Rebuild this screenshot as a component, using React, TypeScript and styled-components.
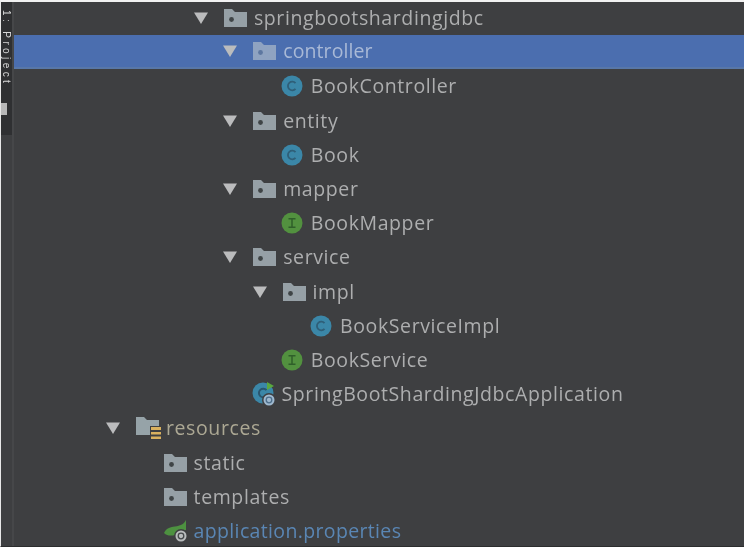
import React from "react";
import styled, { createGlobalStyle } from "styled-components";

const Global = createGlobalStyle`
  html, body { margin: 0; padding: 0; background: #3e3f41; width: 744px; height: 547px; overflow: hidden; }
  #root { width: 744px; height: 547px; }
`;

const Frame = styled.div`
  width: 744px;
  height: 547px;
  box-sizing: border-box;
  border-top: 2px solid #f2f2f2;
  border-left: 1px solid #e8e8e8;
  border-bottom: 1px solid #2c2d2e;
  display: flex;
  background: #3e3f41;
  overflow: hidden;
`;

const Sidebar = styled.div`
  flex: 0 0 13px;
  box-sizing: border-box;
  border-right: 2px solid #464749;
`;

const Strip = styled.div`
  height: 133px;
  background: #2f3032;
  overflow: hidden;
  filter: blur(0.4px);
`;

const StripLabel = styled.span`
  display: block;
  writing-mode: vertical-rl;
  font: 10px/11px "Liberation Sans", sans-serif;
  letter-spacing: 3.4px;
  color: #d8d8d8;
  padding-top: 8px;
  white-space: nowrap;
  height: 84px;
`;

const StripMark = styled.div`
  width: 6px;
  height: 12px;
  margin-top: 9px;
  background: #b8b8b8;
`;

const Tree = styled.div`
  flex: 1;
  display: flex;
  flex-direction: column;
  min-width: 0;
  margin-top: -1px;
  filter: blur(0.55px);
`;

const Row = styled.div<{ $level: number; $selected?: boolean }>`
  box-sizing: border-box;
  height: 34.2px;
  flex: 0 0 34.2px;
  display: flex;
  align-items: center;
  padding-left: ${(p) => 91 + p.$level * 29.3}px;
  background: ${(p) => (p.$selected ? "#4b6eaf" : "transparent")};
  border-bottom: ${(p) => (p.$selected ? "2px solid #5877a8" : "none")};
`;

const ArrowSlot = styled.span`
  flex: 0 0 31px;
  width: 31px;
  height: 16px;
  display: flex;
  align-items: center;
`;

const IconSlot = styled.span`
  flex: 0 0 30px;
  width: 30px;
  height: 24px;
  display: flex;
  align-items: center;
`;

const Label = styled.span<{ $tone?: "plain" | "link" | "res" | "sel" }>`
  font-family: "Open Sans", "Liberation Sans", sans-serif;
  font-size: 19.5px;
  letter-spacing: ${(p) => (p.$tone === "link" ? "0.35px" : p.$tone === "sel" ? "0.1px" : "0.6px")};
  line-height: 24px;
  white-space: nowrap;
  color: ${(p) =>
    p.$tone === "link" ? "#5a86b4" : p.$tone === "res" ? "#aca894" : p.$tone === "sel" ? "#a9b9d6" : "#adaeaf"};
`;

const Arrow = () => (
  <svg width="16" height="14" viewBox="0 0 16 14">
    <path d="M1 1.5h14L8 13z" fill="#bbbcbd" />
  </svg>
);

const Folder = ({ selected }: { selected?: boolean }) => (
  <svg width="23" height="18" viewBox="0 0 23 18">
    <path d="M0 0h8l3 3h12v15H0z" fill={selected ? "#8fa3c1" : "#96a0a6"} />
    <circle cx="7.5" cy="10.5" r="2.4" fill={selected ? "#5d77a0" : "#3f4446"} />
  </svg>
);

const ResFolder = () => (
  <svg width="25" height="24" viewBox="0 0 25 24">
    <path d="M0 1h8l3 3h12v15H0z" fill="#96a3a8" />
    <rect x="14" y="10" width="11" height="14" fill="#3e3f41" />
    <path d="M15 11h10v3H15zM15 16h10v2.500H15zM15 20.500h10v2.500H15z" fill="#d9b15f" />
  </svg>
);

const ClassIcon = () => (
  <svg width="22" height="22" viewBox="0 0 22 22">
    <circle cx="11" cy="11" r="10.500" fill="#3b87a8" />
    <path d="M14.500 8.200A4.300 4.300 0 1 0 14.500 13.800" fill="none" stroke="#2f5f78" strokeWidth="1.800" />
  </svg>
);

const InterfaceIcon = () => (
  <svg width="22" height="22" viewBox="0 0 22 22">
    <circle cx="11" cy="11" r="10.500" fill="#52913f" />
    <path d="M7.500 6.800h7M7.500 15.200h7M11 6.800v8.400" fill="none" stroke="#2f5f2a" strokeWidth="1.500" />
  </svg>
);

const SpringAppIcon = () => (
  <svg width="26" height="26" viewBox="0 0 26 26">
    <circle cx="11" cy="12" r="10.500" fill="#3b87a8" />
    <path d="M14.500 9.200A4.300 4.300 0 1 0 14.500 14.800" fill="none" stroke="#2a566e" strokeWidth="2" />
    <path d="M15 1v8l7-4z" fill="#5aa83f" />
    <circle cx="17" cy="19" r="7" fill="#3e3f41" />
    <circle cx="17" cy="19" r="5.500" fill="#9fb9cf" />
    <circle cx="17" cy="19" r="2.800" fill="none" stroke="#4d6f8c" strokeWidth="1.300" />
  </svg>
);

const PropsIcon = () => (
  <svg width="26" height="24" viewBox="0 0 26 24">
    <path d="M0 14C3 7 11 8 14 7c3-1 6-2 8-6v10c-3 1-8 2-11 5-4 1-8 1-11-2z" fill="#4d9140" />
    <circle cx="17" cy="17" r="7" fill="#3e3f41" />
    <circle cx="17" cy="17" r="5.500" fill="#b9bcbd" />
    <circle cx="17" cy="17" r="2.800" fill="none" stroke="#45494b" strokeWidth="1.300" />
  </svg>
);

type Kind = "folder" | "res" | "class" | "iface" | "app" | "props";

const icons: Record<Kind, (s: boolean) => React.ReactNode> = {
  folder: (s) => <Folder selected={s} />,
  res: () => <ResFolder />,
  class: () => <ClassIcon />,
  iface: () => <InterfaceIcon />,
  app: () => <SpringAppIcon />,
  props: () => <PropsIcon />,
};

type Item = { name: string; level: number; kind: Kind; open?: boolean; selected?: boolean; tone?: "plain" | "link" | "res" };

const items: Item[] = [
  { name: "springbootshardingjdbc", level: 3, kind: "folder", open: true },
  { name: "controller", level: 4, kind: "folder", open: true, selected: true },
  { name: "BookController", level: 5, kind: "class" },
  { name: "entity", level: 4, kind: "folder", open: true },
  { name: "Book", level: 5, kind: "class" },
  { name: "mapper", level: 4, kind: "folder", open: true },
  { name: "BookMapper", level: 5, kind: "iface" },
  { name: "service", level: 4, kind: "folder", open: true },
  { name: "impl", level: 5, kind: "folder", open: true },
  { name: "BookServiceImpl", level: 6, kind: "class" },
  { name: "BookService", level: 5, kind: "iface" },
  { name: "SpringBootShardingJdbcApplication", level: 4, kind: "app" },
  { name: "resources", level: 0, kind: "res", open: true, tone: "res" },
  { name: "static", level: 1, kind: "folder" },
  { name: "templates", level: 1, kind: "folder" },
  { name: "application.properties", level: 1, kind: "props", tone: "link" },
];

// Rows without a twisty start one arrow-slot further right.
const offset = (it: Item) => (it.open ? it.level : it.level + 1);

export default function App() {
  return (
    <>
      <Global />
      <Frame>
        <Sidebar>
          <Strip>
            <StripLabel>1: Project</StripLabel>
            <StripMark />
          </Strip>
        </Sidebar>
        <Tree>
          {items.map((it) => (
            <Row key={it.name} $level={offset(it)} $selected={it.selected}>
              {it.open && (
                <ArrowSlot>
                  <Arrow />
                </ArrowSlot>
              )}
              <IconSlot>{icons[it.kind](!!it.selected)}</IconSlot>
              <Label $tone={it.selected ? "sel" : it.tone}>{it.name}</Label>
            </Row>
          ))}
        </Tree>
      </Frame>
    </>
  );
}
